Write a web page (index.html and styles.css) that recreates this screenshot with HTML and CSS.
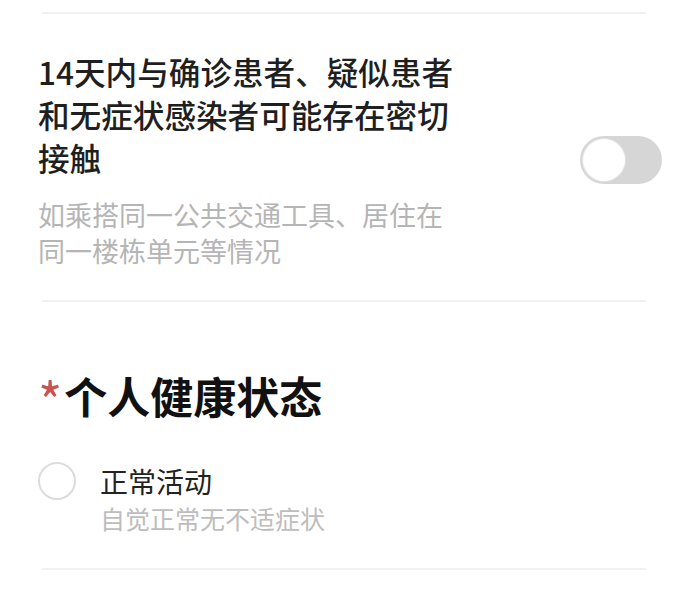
FILE: index.html
```html
<!DOCTYPE html>
<html lang="zh-CN">
<head>
    <meta charset="UTF-8">
    <meta name="viewport" content="width=device-width, initial-scale=1.0">
    <title>健康申报</title>
    <link rel="stylesheet" href="styles.css">
</head>
<body>
    <div class="page">
        <div class="divider"></div>

        <div class="contact-row">
            <div class="contact-text">
                <div class="contact-title">14天内与确诊患者、疑似患者和无症状感染者可能存在密切接触</div>
                <div class="contact-note">如乘搭同一公共交通工具、居住在同一楼栋单元等情况</div>
            </div>
            <div class="switch"><span class="switch-knob"></span></div>
        </div>

        <div class="divider"></div>

        <h2 class="section-title"><span class="required">*</span>个人健康状态</h2>

        <div class="option">
            <span class="radio"></span>
            <div class="option-text">
                <div class="option-label">正常活动</div>
                <div class="option-note">自觉正常无不适症状</div>
            </div>
        </div>

        <div class="divider"></div>
    </div>
</body>
</html>
```

FILE: styles.css
```css
body {
    margin: 0;
    background-color: #fff;
    font-family: "Noto Sans CJK SC", "Noto Sans", sans-serif;
    color: #222;
}
.page {
    padding: 12px 38px 0 38px;
}
.divider {
    height: 2px;
    margin: 0 16px 0 4px;
    background-color: #f1f1f1;
}
.contact-row {
    display: flex;
    align-items: center;
    justify-content: space-between;
    padding: 36px 0 31px;
}
.contact-text {
    width: 420px;
}
.contact-title {
    font-size: 31.6px;
    line-height: 43px;
    font-weight: 500;
    color: #1f1f1f;
}
.contact-note {
    margin-top: 18px;
    font-size: 27px;
    line-height: 36px;
    color: #b5b5b5;
}
.switch {
    width: 82px;
    height: 48px;
    border-radius: 24px;
    background-color: #d6d6d6;
    padding: 3px;
    box-sizing: border-box;
}
.switch-knob {
    display: block;
    width: 42px;
    height: 42px;
    border-radius: 50%;
    background-color: #fff;
    box-shadow: 0 0 0 1px #e2e2e2;
}
.section-title {
    display: flex;
    align-items: flex-start;
    height: 56px;
    margin: 65px 0 0;
    font-size: 43px;
    line-height: 56px;
    font-weight: 700;
    color: #111;
}
.required {
    font-size: 52px;
    line-height: 44px;
    margin: 10px 2px 0 0;
    color: #c9534f;
    font-weight: 400;
}
.option {
    display: flex;
    gap: 24px;
    margin-top: 39px;
    padding-bottom: 32px;
}
.radio {
    width: 38px;
    height: 38px;
    box-sizing: border-box;
    border: 2px solid #dcdcdc;
    border-radius: 50%;
    flex-shrink: 0;
}
.option-label {
    font-size: 28px;
    line-height: 38px;
    color: #222;
}
.option-note {
    font-size: 25px;
    line-height: 36px;
    color: #bdbdbd;
}
```
